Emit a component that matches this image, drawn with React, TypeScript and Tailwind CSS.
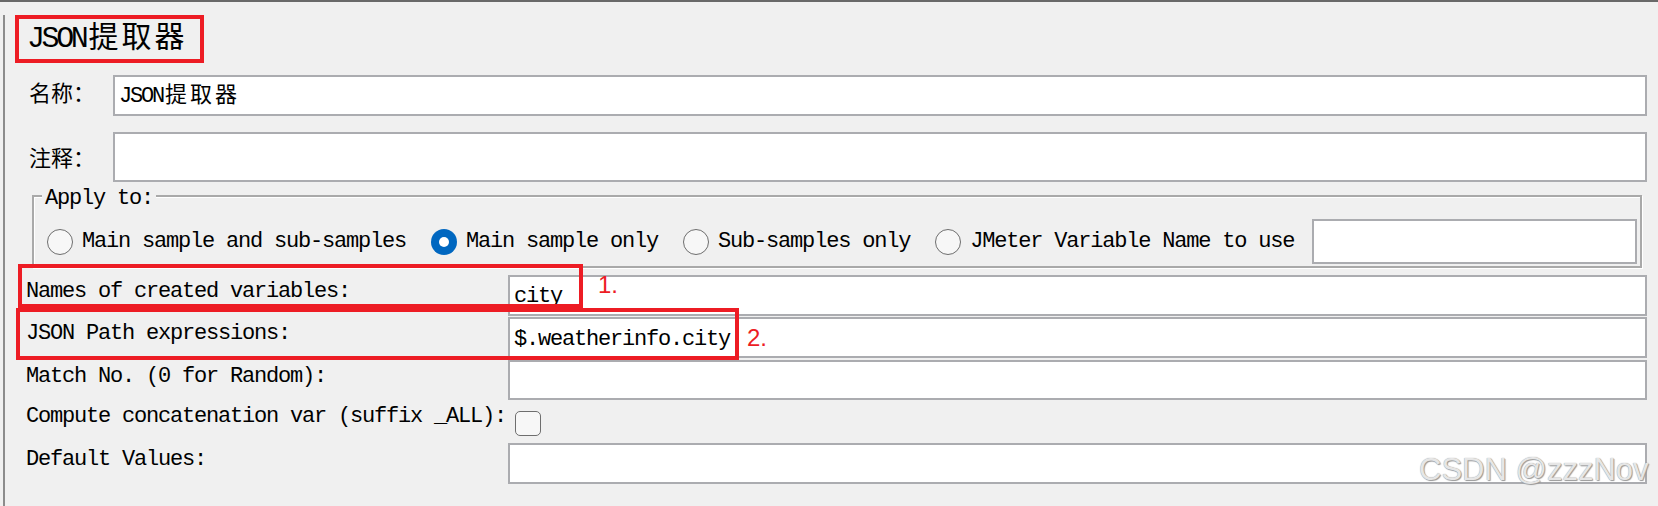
import React from "react";

const mono = "font-['Liberation_Mono','Noto_Sans_CJK_SC',monospace]";

function Radio({ checked = false }: { checked?: boolean }) {
  if (checked) {
    return (
      <span className="flex h-[26px] w-[26px] shrink-0 items-center justify-center rounded-full bg-[#0067c0]">
        <span className="h-[10px] w-[10px] rounded-full bg-white" />
      </span>
    );
  }
  return (
    <span className="h-[26px] w-[26px] shrink-0 rounded-full border-[1.5px] border-[#6e6e6e] bg-[#f7f7f7]" />
  );
}

function Field({ children, className = "" }: { children?: React.ReactNode; className?: string }) {
  return (
    <div
      className={`mr-[11px] flex h-full flex-1 items-center border-2 border-[#abacb0] bg-white pl-[4px] text-[22px] tracking-[-1.2px] ${className}`}
    >
      {children}
    </div>
  );
}

function Row({
  label,
  height,
  top = "",
  children,
}: {
  label: string;
  height: string;
  top?: string;
  children: React.ReactNode;
}) {
  return (
    <div className={`flex ${height} ${top}`}>
      <div className="w-[503px] shrink-0 pl-[21px] pt-[4px] text-[22px] leading-[26px] tracking-[-1.2px] whitespace-pre">
        {label}
      </div>
      {children}
    </div>
  );
}

export default function App() {
  const radios = [
    { label: "Main sample and sub-samples", checked: false },
    { label: "Main sample only", checked: true },
    { label: "Sub-samples only", checked: false },
    { label: "JMeter Variable Name to use", checked: false },
  ];

  return (
    <div
      className={`relative h-[506px] w-[1658px] overflow-hidden border-t-2 border-[#696969] bg-[#f0f0f0] text-black ${mono}`}
    >
      <div className="ml-[3px] h-full border-l-2 border-[#8c8c8c]">
        {/* title */}
        <div className="ml-[10px] mt-[13px] flex h-[48px] w-[189px] items-center border-4 border-[#ed1c24] pl-[8px] text-[30px] leading-none">
          <span className="tracking-[-3.4px]">JSON</span>
          <span className="ml-[3px] tracking-[3px]">提取器</span>
        </div>

        {/* name / comment */}
        <div className="mt-[12px] flex h-[41px] items-center">
          <div className="w-[108px] shrink-0 pl-[24px] text-[22px]">名称：</div>
          <Field className="pt-[2px]">
            <span className="tracking-[-2.2px]">JSON</span>
            <span className="ml-[2px] tracking-[3px]">提取器</span>
          </Field>
        </div>
        <div className="mt-[16px] flex h-[50px] items-center">
          <div className="w-[108px] shrink-0 pl-[24px] pt-[6px] text-[22px]">注释：</div>
          <Field />
        </div>

        {/* apply to */}
        <div className="relative ml-[27px] mr-[16px] mt-[13px] h-[73px] border-2 border-[#a9a9a9] shadow-[inset_1px_1px_0_#ffffff,1px_1px_0_#ffffff]">
          <div className="absolute -top-[9px] left-[8px] bg-[#f0f0f0] px-[3px] text-[22px] leading-[22px] tracking-[-1.2px]">
            Apply to:
          </div>
          <div className="flex h-full items-end pb-[2px]">
            <div className="flex h-[45px] w-full items-center pl-[13px]">
              {radios.map((r, i) => (
                <div key={r.label} className={`flex items-center ${i === 0 ? "" : "ml-[25px]"}`}>
                  <Radio checked={r.checked} />
                  <span className="ml-[9px] whitespace-pre text-[22px] leading-[26px] tracking-[-1.2px]">
                    {r.label}
                  </span>
                </div>
              ))}
              <div className="ml-[18px] mr-[3px] h-full flex-1 border-2 border-[#abacb0] bg-white" />
            </div>
          </div>
        </div>

        {/* extractor settings */}
        <div className="relative mt-[7px]">
          <Row label="Names of created variables:" height="h-[41px]">
            <Field className="pt-[1px]">city</Field>
          </Row>
          <Row label="JSON Path expressions:" height="h-[41px]" top="mt-[1px]">
            <Field className="pt-[3px]">$.weatherinfo.city</Field>
          </Row>
          <Row label="Match No. (0 for Random):" height="h-[40px]" top="mt-[2px]">
            <Field />
          </Row>
          <Row label="Compute concatenation var (suffix _ALL):" height="h-[43px]">
            <div className="ml-[7px] mt-[11px] h-[25px] w-[26px] rounded-[5px] border-[1.5px] border-[#6e6e6e] bg-[#f7f7f7]" />
          </Row>
          <Row label="Default Values:" height="h-[41px]">
            <Field />
          </Row>

          {/* annotations */}
          <div className="absolute left-[13px] top-[-11px] h-[44px] w-[565px] border-4 border-[#ed1c24]" />
          <div className="absolute left-[11px] top-[33px] h-[52px] w-[723px] border-4 border-[#ed1c24]" />
          <div className="absolute left-[593px] top-[-3px] font-['Liberation_Sans',sans-serif] text-[24px] leading-[26px] text-[#ed1c24]">
            1.
          </div>
          <div className="absolute left-[742px] top-[50px] font-['Liberation_Sans',sans-serif] text-[24px] leading-[26px] text-[#ed1c24]">
            2.
          </div>
        </div>
      </div>

      <div className="absolute left-[1419px] top-[452px] whitespace-pre font-['Liberation_Sans',sans-serif] text-[31px] leading-none text-[#e6e6e6] [text-shadow:0_0_1px_#8a8a8a,1px_1px_1px_#9a9a9a]">
        CSDN @zzzNov
      </div>
    </div>
  );
}
